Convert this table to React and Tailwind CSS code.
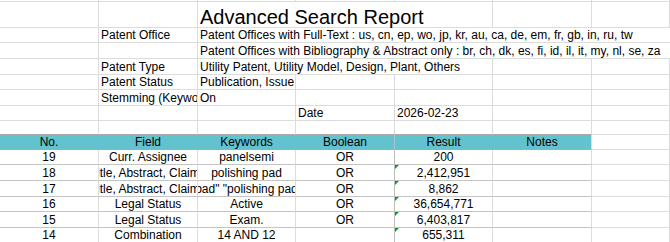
import React from "react";

const G = "border-[#dcdcdc]";

function Cell({ w, className = "", children }) {
  return (
    <div
      className={
        "relative shrink-0 h-full flex items-end overflow-hidden whitespace-nowrap border-r border-b " +
        w +
        " " +
        className
      }
    >
      {children}
    </div>
  );
}

function Tri() {
  return (
    <span className="absolute left-0 top-0 w-0 h-0 border-t-[4px] border-t-[#1f8f2a] border-r-[4px] border-r-transparent" />
  );
}

const rows = [
  { no: "19", field: "Curr. Assignee", kw: "panelsemi", bool: "OR", res: "200", tri: false, h: "h-[15px]" },
  { no: "18", field: "Title, Abstract, Claims", kw: "polishing pad", bool: "OR", res: "2,412,951", tri: true, h: "h-[16px]" },
  { no: "17", field: "Title, Abstract, Claims", kw: "\"pad\" \"polishing pad\"", bool: "OR", res: "8,862", tri: true, h: "h-[16px]" },
  { no: "16", field: "Legal Status", kw: "Active", bool: "OR", res: "36,654,771", tri: true, h: "h-[15px]" },
  { no: "15", field: "Legal Status", kw: "Exam.", bool: "OR", res: "6,403,817", tri: true, h: "h-[16px]" },
  { no: "14", field: "Combination", kw: "14 AND 12", bool: "", res: "655,311", tri: true, h: "h-[15px]" },
];

export default function App() {
  const T = "border-[#c4c4c4] border-r-[#dcdcdc]";
  const center = "justify-center";
  return (
    <div className="w-[670px] h-[242px] overflow-hidden bg-white text-black font-['Liberation_Sans',Arial,sans-serif] text-[12px] leading-[13px]">
      {/* row 0 */}
      <div className="flex h-[2px]">
        <Cell w="w-[99px]" className={G} />
        <Cell w="w-[99px]" className={G} />
        <Cell w="w-[98px]" className={G} />
        <Cell w="w-[99px]" className={G} />
        <Cell w="w-[98px]" className={G} />
        <Cell w="w-[99px]" className={G} />
        <Cell w="flex-1" className={G} />
      </div>
      {/* title */}
      <div className="flex h-[26px]">
        <Cell w="w-[99px]" className={G} />
        <Cell w="w-[99px]" className={G} />
        <Cell w="w-[295px]" className={G + " pl-[2px] overflow-visible"}>
          <span className="text-[20px] leading-[20px]">Advanced Search Report</span>
        </Cell>
        <Cell w="w-[99px]" className={G} />
        <Cell w="flex-1" className={G} />
      </div>
      {/* patent office */}
      <div className="flex h-[15px]">
        <Cell w="w-[99px]" className={G} />
        <Cell w="w-[99px]" className={G + " pl-[2px]"}>Patent Office</Cell>
        <Cell w="flex-1" className={G + " pl-[2px] border-r-0"}>
          Patent Offices with Full-Text : us, cn, ep, wo, jp, kr, au, ca, de, em, fr, gb, in, ru, tw
        </Cell>
      </div>
      <div className="flex h-[16px]">
        <Cell w="w-[99px]" className={G} />
        <Cell w="w-[99px]" className={G} />
        <Cell w="flex-1" className={G + " pl-[2px] border-r-0"}>
          Patent Offices with Bibliography &amp; Abstract only : br, ch, dk, es, fi, id, il, it, my, nl, se, za
        </Cell>
      </div>
      {/* patent type */}
      <div className="flex h-[16px]">
        <Cell w="w-[99px]" className={G} />
        <Cell w="w-[99px]" className={G + " pl-[2px]"}>Patent Type</Cell>
        <Cell w="w-[295px]" className={G + " pl-[2px]"}>
          Utility Patent, Utility Model, Design, Plant, Others
        </Cell>
        <Cell w="w-[99px]" className={G} />
        <Cell w="flex-1" className={G} />
      </div>
      {/* patent status */}
      <div className="flex h-[15px]">
        <Cell w="w-[99px]" className={G} />
        <Cell w="w-[99px]" className={G + " pl-[2px]"}>Patent Status</Cell>
        <Cell w="w-[98px]" className={G + " pl-[2px]"}>Publication, Issue</Cell>
        <Cell w="w-[99px]" className={G} />
        <Cell w="w-[98px]" className={G} />
        <Cell w="w-[99px]" className={G} />
        <Cell w="flex-1" className={G} />
      </div>
      {/* stemming */}
      <div className="flex h-[16px]">
        <Cell w="w-[99px]" className={G} />
        <Cell w="w-[99px]" className={G + " pl-[2px]"}>Stemming (Keywords)</Cell>
        <Cell w="w-[98px]" className={G + " pl-[2px]"}>On</Cell>
        <Cell w="w-[99px]" className={G} />
        <Cell w="w-[98px]" className={G} />
        <Cell w="w-[99px]" className={G} />
        <Cell w="flex-1" className={G} />
      </div>
      {/* date */}
      <div className="flex h-[15px]">
        <Cell w="w-[99px]" className={G} />
        <Cell w="w-[99px]" className={G} />
        <Cell w="w-[98px]" className={G} />
        <Cell w="w-[99px]" className={G + " pl-[2px]"}>Date</Cell>
        <Cell w="w-[98px]" className={G + " pl-[2px]"}>2026-02-23</Cell>
        <Cell w="w-[99px]" className={G} />
        <Cell w="flex-1" className={G} />
      </div>
      {/* empty */}
      <div className="flex h-[14px]">
        <Cell w="w-[99px]" className="border-[#dcdcdc] border-b-[#a9a9a9]" />
        <Cell w="w-[99px]" className="border-[#dcdcdc] border-b-[#a9a9a9]" />
        <Cell w="w-[98px]" className="border-[#dcdcdc] border-b-[#a9a9a9]" />
        <Cell w="w-[99px]" className="border-[#dcdcdc] border-b-[#a9a9a9]" />
        <Cell w="w-[98px]" className="border-[#dcdcdc] border-b-[#a9a9a9]" />
        <Cell w="w-[99px]" className="border-[#dcdcdc] border-b-[#a9a9a9]" />
        <Cell w="flex-1" className={G} />
      </div>
      {/* header */}
      <div className="flex h-[15px]">
        <Cell w="w-[99px]" className="bg-[#62c3cf] border-b-[#a9a9a9] border-r-[#62c3cf] justify-center">No.</Cell>
        <Cell w="w-[99px]" className="bg-[#62c3cf] border-b-[#a9a9a9] border-r-[#62c3cf] justify-center">Field</Cell>
        <Cell w="w-[98px]" className="bg-[#62c3cf] border-b-[#a9a9a9] border-r-[#62c3cf] justify-center">Keywords</Cell>
        <Cell w="w-[99px]" className="bg-[#62c3cf] border-b-[#a9a9a9] border-r-[#a3c9ce] justify-center">Boolean</Cell>
        <Cell w="w-[98px]" className="bg-[#62c3cf] border-b-[#a9a9a9] border-r-[#62c3cf] justify-center">Result</Cell>
        <Cell w="w-[99px]" className="bg-[#62c3cf] border-b-[#a9a9a9] border-r-[#dcdcdc] justify-center">Notes</Cell>
        <Cell w="flex-1" className={G} />
      </div>
      {rows.map((r) => (
        <div key={r.no} className={"flex " + r.h}>
          <Cell w="w-[99px]" className={T + " " + center}>{r.no}</Cell>
          <Cell w="w-[99px]" className={T + " " + center}>{r.field}</Cell>
          <Cell w="w-[98px]" className={T + " " + center}>{r.kw}</Cell>
          <Cell w="w-[99px]" className={"border-[#c4c4c4] border-r-[#bdbdbd] " + center}>{r.bool}</Cell>
          <Cell w="w-[98px]" className={T + " " + center}>
            {r.tri && <Tri />}
            {r.res}
          </Cell>
          <Cell w="w-[99px]" className={T} />
          <Cell w="flex-1" className={G} />
        </div>
      ))}
    </div>
  );
}
